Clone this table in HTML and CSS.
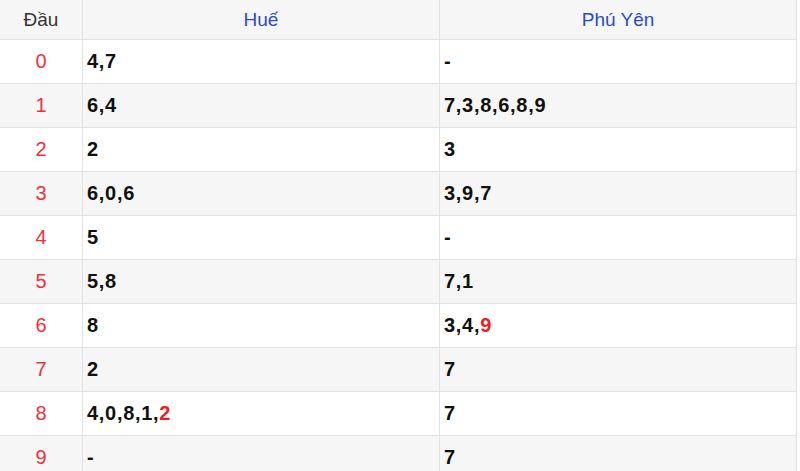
FILE: index.html
```html
<!DOCTYPE html>
<html>
<head>
<meta charset="utf-8">
<link rel="stylesheet" href="styles.css">
</head>
<body>
<table class="loto">
  <thead>
    <tr><th class="col-dau">Đầu</th><th class="col-prov">Huế</th><th class="col-prov">Phú Yên</th></tr>
  </thead>
  <tbody>
    <tr><td class="dau">0</td><td class="val">4,7</td><td class="val">-</td></tr>
    <tr><td class="dau">1</td><td class="val">6,4</td><td class="val">7,3,8,6,8,9</td></tr>
    <tr><td class="dau">2</td><td class="val">2</td><td class="val">3</td></tr>
    <tr><td class="dau">3</td><td class="val">6,0,6</td><td class="val">3,9,7</td></tr>
    <tr><td class="dau">4</td><td class="val">5</td><td class="val">-</td></tr>
    <tr><td class="dau">5</td><td class="val">5,8</td><td class="val">7,1</td></tr>
    <tr><td class="dau">6</td><td class="val">8</td><td class="val">3,4,<span class="hot">9</span></td></tr>
    <tr><td class="dau">7</td><td class="val">2</td><td class="val">7</td></tr>
    <tr><td class="dau">8</td><td class="val">4,0,8,1,<span class="hot">2</span></td><td class="val">7</td></tr>
    <tr><td class="dau">9</td><td class="val">-</td><td class="val">7</td></tr>
  </tbody>
</table>
</body>
</html>
```

FILE: styles.css
```css
html, body {
  margin: 0;
  padding: 0;
  background: #fff;
}
body {
  font-family: "Liberation Sans", Arial, sans-serif;
}
.loto {
  width: 797px;
  border-collapse: collapse;
  table-layout: fixed;
}
.loto th, .loto td {
  border: 1px solid #e2e2e2;
  padding: 0 4px;
}
.loto tr > :first-child {
  border-left: none;
}
.loto thead th {
  border-top: none;
  height: 39px;
  background: #f6f6f6;
  font-weight: normal;
  font-size: 19px;
  text-align: center;
}
.col-dau {
  width: 74px;
  color: #333;
}
.col-prov {
  color: #2b4bc7;
}
.loto tbody td {
  height: 43px;
}
.loto tbody tr:nth-child(even) {
  background: #f6f6f6;
}
.dau {
  text-align: center;
  color: #f0303a;
  font-size: 20px;
}
.val {
  font-weight: bold;
  font-size: 20px;
  color: #111;
  letter-spacing: 0.7px;
}
.hot {
  color: #f01e1e;
}
```
